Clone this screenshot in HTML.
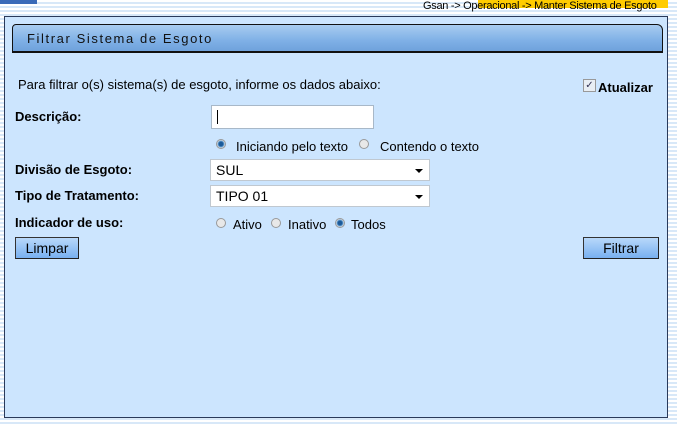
<!DOCTYPE html>
<html><head><style>
body{margin:0;width:677px;height:426px;overflow:hidden;font-family:"Liberation Sans",sans-serif;
background:repeating-linear-gradient(#fff 0 2px,#d8e8f8 2px 4px);position:relative}
.a{position:absolute}
.panel{left:4px;top:16px;width:662px;height:400px;background:#cce5fe;border:1px solid #2a3a5a}
.hdr{left:12px;top:24px;width:649px;height:26px;background:linear-gradient(#a8ccf0,#7fb0e6 60%,#6fa2dc);border:1px solid #111;border-radius:4px 6px 0 0;border-bottom-width:2px}
.hdr span{position:absolute;left:14px;top:6px;font-size:13px;letter-spacing:1.6px;color:#111}
.t{font-size:13px;color:#000}
.b{font-weight:bold}
.in{background:#fff;border:1px solid #a8b8c8}
.sel{background:#fff;border:1px solid #c0c8d0;height:20px;font-size:14px}
.sel i{position:absolute;right:6px;top:9px;border:4px solid transparent;border-top:4px solid #000;border-bottom:0}
.r{width:10px;height:10px;border-radius:50%;background:#e8e8e8;border:1px solid #999;box-sizing:border-box}
.r.on{background:radial-gradient(#1a5a9a 0 2px,#6aa0d0 3px,#e8e8e8 4px)}
.btn{background:linear-gradient(#b8d8fa,#78b0f0);border:1px solid #333;border-right-color:#222;border-bottom-color:#222;font-size:14px;text-align:center;line-height:20px;height:20px}
</style></head><body>
<div class="a" style="left:0;top:0;width:37px;height:4px;background:#3a6ab8"></div>
<div class="a" style="left:478px;top:0;width:190px;height:8px;background:#ffcc00"></div>
<div class="a t" style="left:423px;top:0px;font-size:11px;letter-spacing:-0.3px">Gsan -&gt; Operacional -&gt; Manter Sistema de Esgoto</div>
<div class="a panel"></div>
<div class="a hdr"><span>Filtrar Sistema de Esgoto</span></div>
<div class="a t" style="left:18px;top:77px;">Para filtrar o(s) sistema(s) de esgoto, informe os dados abaixo:</div>
<div class="a" style="left:583px;top:79px;width:11px;height:11px;background:#e8eef4;border:1px solid #999;font-size:10px;line-height:11px;text-align:center;color:#335">✓</div>
<div class="a t b" style="left:598px;top:80px;">Atualizar</div>
<div class="a t b" style="left:15px;top:109px;">Descrição:</div>
<div class="a in" style="left:211px;top:105px;width:161px;height:22px"><div class="a" style="left:5px;top:4px;width:1px;height:14px;background:#000"></div></div>
<div class="a r on" style="left:216px;top:139px"></div>
<div class="a t" style="left:236px;top:139px;">Iniciando pelo texto</div>
<div class="a r" style="left:359px;top:139px"></div>
<div class="a t" style="left:380px;top:139px;">Contendo o texto</div>
<div class="a t b" style="left:15px;top:162px;">Divisão de Esgoto:</div>
<div class="a sel" style="left:210px;top:159px;width:218px"><span class="a" style="left:5px;top:2px">SUL</span><i></i></div>
<div class="a t b" style="left:15px;top:188px;">Tipo de Tratamento:</div>
<div class="a sel" style="left:210px;top:185px;width:218px"><span class="a" style="left:5px;top:2px">TIPO 01</span><i></i></div>
<div class="a t b" style="left:15px;top:215px;">Indicador de uso:</div>
<div class="a r" style="left:216px;top:218px"></div>
<div class="a t" style="left:233px;top:217px;">Ativo</div>
<div class="a r" style="left:271px;top:218px"></div>
<div class="a t" style="left:288px;top:217px;">Inativo</div>
<div class="a r on" style="left:335px;top:218px"></div>
<div class="a t" style="left:351px;top:217px;">Todos</div>
<div class="a btn" style="left:15px;top:237px;width:62px">Limpar</div>
<div class="a btn" style="left:583px;top:237px;width:74px">Filtrar</div>
</body></html>
